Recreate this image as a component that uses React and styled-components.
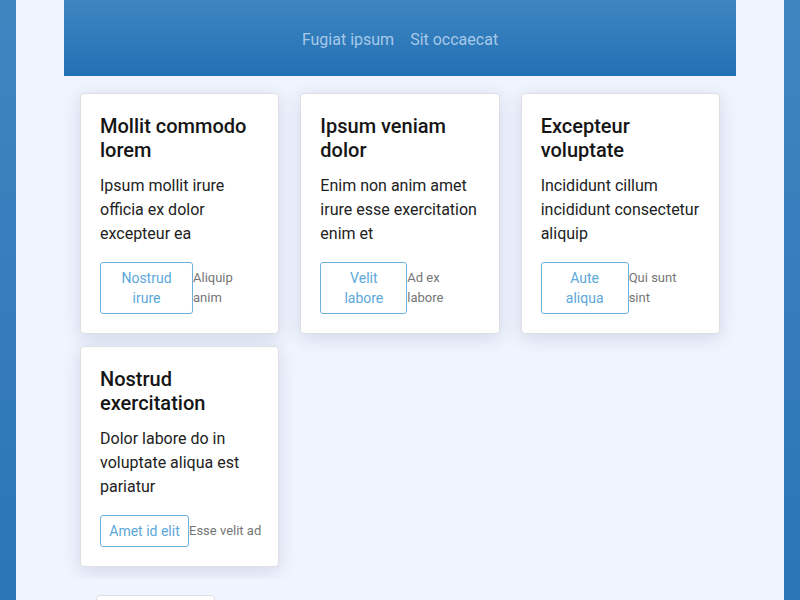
import React from "react";
import styled, { createGlobalStyle } from "styled-components";

const Global = createGlobalStyle`
  html, body { margin: 0; padding: 0; }
  body {
    font-family: Roboto, "Liberation Sans", sans-serif;
    background: linear-gradient(180deg, #3f86c1 0%, #2a73b5 100%);
    min-height: 100vh;
  }
`;

const Main = styled.div`
  margin: 0 16px;
  background: #eff4fe;
  min-height: 100vh;
`;

const Header = styled.header`
  margin: 0 48px;
  height: 76px;
  background: linear-gradient(180deg, #3f86c1 0%, #2270b4 100%);
  display: flex;
  align-items: center;
  justify-content: center;
  gap: 16px;
`;

const NavLink = styled.a`
  color: #a6c9e9;
  font-size: 16px;
  text-decoration: none;
  line-height: 24px;
  padding-top: 3px;
`;

const Section = styled.section`
  margin: 0 48px;
  padding: 17px 16px 12px;
  overflow: hidden;
`;

const Grid = styled.div`
  display: grid;
  grid-template-columns: repeat(3, minmax(0, 1fr));
  column-gap: 21px;
  row-gap: 12px;
  align-items: start;
`;

const Card = styled.article`
  background: #fff;
  border: 1px solid #dedfe3;
  border-radius: 4px;
  padding: 20px 19px 19px;
  box-shadow: 0 4px 18px rgba(40, 50, 90, 0.14);
`;

const Title = styled.h2`
  margin: 0 0 12px;
  font-size: 20px;
  line-height: 24px;
  font-weight: 500;
  color: #151515;
`;

const Body = styled.p`
  margin: 0 0 16px;
  font-size: 16px;
  line-height: 24px;
  color: #222;
`;

const Actions = styled.div`
  display: flex;
  align-items: center;
`;

const Button = styled.button`
  flex: 0 0 auto;
  width: ${(p) => p.$w}px;
  font-family: inherit;
  font-size: 14px;
  line-height: 20px;
  color: #5ca8d9;
  background: #fff;
  border: 1px solid #6cb0de;
  border-radius: 3px;
  padding: 5px 0;
  text-align: center;
  white-space: pre;
  cursor: pointer;
`;

const Side = styled.span`
  font-size: 13px;
  line-height: 20px;
  color: #757575;
  white-space: pre;
`;

const Footer = styled.div`
  padding: 16px 80px 0;
`;

const FooterBox = styled.div`
  width: 117px;
  height: 40px;
  background: #fff;
  border: 1px solid #dcdde2;
  border-radius: 4px;
`;

const cards = [
  { t: "Mollit commodo lorem", b: "Ipsum mollit irure officia ex dolor excepteur ea", btn: "Nostrud\nirure", w: 93, s: "Aliquip\nanim" },
  { t: "Ipsum veniam dolor", b: "Enim non anim amet irure esse exercitation enim et", btn: "Velit\nlabore", w: 87, s: "Ad ex\nlabore" },
  { t: "Excepteur voluptate", b: "Incididunt cillum incididunt consectetur aliquip", btn: "Aute\naliqua", w: 88, s: "Qui sunt\nsint" },
  { t: "Nostrud exercitation", b: "Dolor labore do in voluptate aliqua est pariatur", btn: "Amet id elit", w: 89, s: "Esse velit ad" },
];

export default function App() {
  return (
    <>
      <Global />
      <Main>
        <Header>
          <NavLink href="#">Fugiat ipsum</NavLink>
          <NavLink href="#">Sit occaecat</NavLink>
        </Header>
        <Section>
          <Grid>
            {cards.map((c) => (
              <Card key={c.t}>
                <Title>{c.t}</Title>
                <Body>{c.b}</Body>
                <Actions>
                  <Button $w={c.w}>{c.btn}</Button>
                  <Side>{c.s}</Side>
                </Actions>
              </Card>
            ))}
          </Grid>
        </Section>
        <Footer>
          <FooterBox />
        </Footer>
      </Main>
    </>
  );
}
